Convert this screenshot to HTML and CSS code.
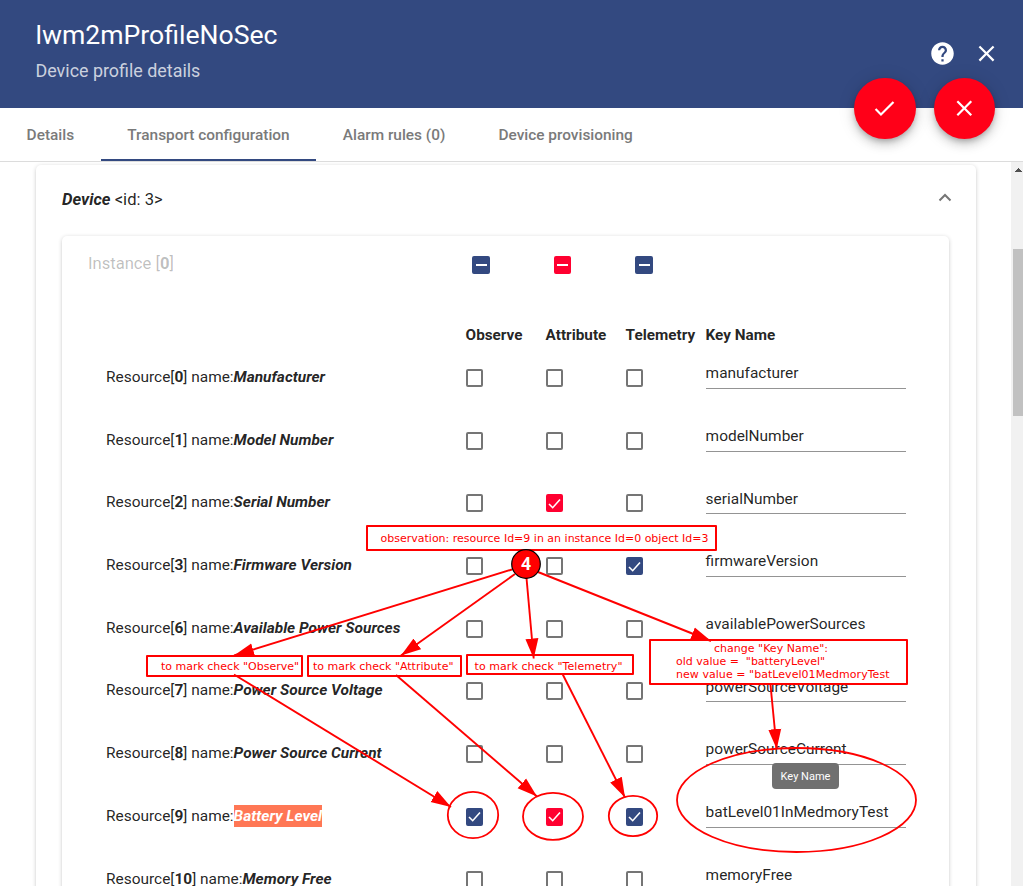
FILE: index.html
```html
<!DOCTYPE html>
<html lang="en">
<head>
<meta charset="utf-8">
<title>Device profile details</title>
<link rel="stylesheet" href="styles.css">
</head>
<body>
<div class="page">
  <header class="header">
    <div class="titles">
      <h1 class="title">lwm2mProfileNoSec</h1>
      <p class="subtitle">Device profile details</p>
    </div>
    <div class="header-actions">
      <svg class="icon" viewBox="0 0 24 24"><path d="M12 2C6.48 2 2 6.48 2 12s4.48 10 10 10 10-4.480 10-10S17.520 2 12 2zm1 17h-2v-2h2v2zm2.070-7.750l-.9.920C13.450 12.900 13 13.500 13 15h-2v-.5c0-1.100.45-2.100 1.170-2.830l1.240-1.260c.37-.36.59-.86.59-1.410 0-1.100-.9-2-2-2s-2 .9-2 2H8c0-2.210 1.790-4 4-4s4 1.790 4 4c0 .88-.36 1.680-.93 2.250z"/></svg>
      <svg class="icon" viewBox="0 0 24 24"><path d="M19 6.410L17.590 5 12 10.590 6.410 5 5 6.410 10.590 12 5 17.590 6.410 19 12 13.410 17.590 19 19 17.590 13.410 12z"/></svg>
    </div>
    <div class="fabs">
      <button class="fab"><svg class="icon" viewBox="0 0 24 24"><path d="M9 16.170L4.830 12l-1.420 1.410L9 19 21 7l-1.410-1.410z"/></svg></button>
      <button class="fab"><svg class="icon" viewBox="0 0 24 24"><path d="M19 6.410L17.590 5 12 10.590 6.410 5 5 6.410 10.590 12 5 17.590 6.410 19 12 13.410 17.590 19 19 17.590 13.410 12z"/></svg></button>
    </div>
  </header>
  <nav class="tabs">
    <span class="tab">Details</span>
    <span class="tab active">Transport configuration</span>
    <span class="tab">Alarm rules (0)</span>
    <span class="tab">Device provisioning</span>
  </nav>
  <main class="body">
    <div class="scroll-area">
      <section class="card">
        <div class="card-head">
          <span class="card-title"><b><i>Device</i></b> &lt;id: 3&gt;</span>
          <svg class="chevron" viewBox="0 0 14 9"><path d="M1.500 7.500L7 2l5.500 5.500"/></svg>
        </div>
        <section class="instance">
          <div class="instance-head">
            <span class="instance-title">Instance [<b>0</b>]</span>
            <span class="box blue dash"></span>
            <span class="box red dash"></span>
            <span class="box blue dash"></span>
          </div>
          <div class="row column-names">
            <span></span><span>Observe</span><span>Attribute</span><span>Telemetry</span><span>Key Name</span>
          </div>
          <div class="rows" id="rows"></div>
        </section>
      </section>
    </div>
    <div class="scrollbar">
      <svg class="scroll-arrow" viewBox="0 0 7 4"><path d="M3 0h1v1h1v1h1v1h1v1H0V3h1V2h1V1h1z"/></svg>
      <div class="thumb"></div>
    </div>
  </main>

  <div class="tooltip">Key Name</div>

  <svg class="annotations" viewBox="0 0 1023 886">
    <defs>
      <marker id="head" markerUnits="userSpaceOnUse" markerWidth="20" markerHeight="14" refX="20" refY="7" orient="auto"><path d="M0 0.500L20 7L0 13.500z"/></marker>
    </defs>
    <g class="note-box">
      <rect x="367" y="526" width="349" height="24"/>
      <rect x="147" y="656" width="155" height="20"/>
      <rect x="308" y="656" width="153" height="20"/>
      <rect x="467" y="655" width="166" height="19"/>
      <rect x="650" y="640" width="257" height="44"/>
    </g>
    <g class="ring">
      <ellipse cx="473" cy="815" rx="25.200" ry="23.200"/>
      <ellipse cx="553" cy="816.400" rx="30" ry="23.500"/>
      <ellipse cx="633" cy="816" rx="24.200" ry="20.200"/>
      <ellipse cx="796.500" cy="800" rx="119.500" ry="52"/>
    </g>
    <g class="arrow">
      <path d="M512 569.500L234 655.500"/>
      <path d="M515 574L401 655.500"/>
      <path d="M526.500 578L533.700 658.500"/>
      <path d="M538 572L711 641"/>
      <path d="M234 674.500L451 807"/>
      <path d="M396 675L537 796.500"/>
      <path d="M562.500 674L625 797.500"/>
      <path d="M770.500 685L776.700 749"/>
    </g>
    <g class="note-text">
      <text x="380.500" y="542" textLength="328">observation: resource Id=9 in an instance Id=0 object Id=3</text>
      <text x="161" y="670" textLength="138">to mark check "Observe"</text>
      <text x="313" y="670" textLength="140.500">to mark check "Attribute"</text>
      <text x="474.500" y="670" textLength="148">to mark check "Telemetry"</text>
      <text x="714" y="652" textLength="114">change "Key Name":</text>
      <text x="676" y="665" textLength="149">old value = &#160;"batteryLevel"</text>
      <text x="676" y="678" textLength="213.500">new value = "batLevel01MedmoryTest</text>
    </g>
    <circle class="badge" cx="526" cy="564" r="14.300"/>
    <text class="badge-text" x="526" y="570">4</text>
  </svg>
</div>
<script src="rows.js"></script>
</body>
</html>
```
FILE: styles.css
```css
* { box-sizing: border-box; }
body { margin: 0; font-family: Roboto, sans-serif; color: rgba(0, 0, 0, .87); background: #fff; }
.page { position: relative; width: 1023px; height: 886px; overflow: hidden; display: flex; flex-direction: column; }

.header { position: relative; flex: none; height: 108px; padding: 18px 23px 0 35.500px; background: #334980; color: #fff; display: flex; justify-content: space-between; }
.title { margin: 0; font-size: 26.600px; font-weight: 400; line-height: 34px; }
.subtitle { margin: 8px 0 0; font-size: 17.900px; line-height: 22px; color: rgba(255, 255, 255, .75); }
.header-actions { display: flex; gap: 17px; padding-top: 22px; }
.icon { width: 27px; height: 27px; display: block; fill: #fff; }
.fabs { position: absolute; z-index: 2; right: 28px; top: 77.600px; display: flex; gap: 18px; }
.fab { width: 61.500px; height: 61.500px; padding: 0; border: 0; border-radius: 50%; background: #ff0018; display: flex; align-items: center; justify-content: center; box-shadow: 0 3px 5px -1px rgba(0, 0, 0, .2), 0 6px 10px rgba(0, 0, 0, .14), 0 1px 18px rgba(0, 0, 0, .12); }
.fab .icon { width: 26.600px; height: 26.600px; }

.tabs { flex: none; height: 54px; border-bottom: 1px solid #dcdcdc; display: flex; }
.tab { padding: 1px 26.600px 0; line-height: 53px; font-size: 15.400px; font-weight: 500; color: #7a7a7a; white-space: nowrap; }
.tab.active { height: 53px; border-bottom: 2px solid #334980; }

.body { flex: 1; min-height: 0; display: flex; }
.scroll-area { flex: 1; overflow: hidden; padding: 3px 35px 0 36px; }
.card { height: 800px; padding: 0 27px 0 26px; border-radius: 5px; box-shadow: 0 2px 2px -1px rgba(0, 0, 0, .15), 0 1px 4px rgba(0, 0, 0, .2); }
.card-head { height: 71px; display: flex; align-items: center; justify-content: space-between; font-size: 16.600px; }
.card-title { padding-bottom: 3px; }
.chevron { width: 14px; height: 9px; margin: 0 -3px 7px 0; fill: none; stroke: #757575; stroke-width: 2; }
.instance { height: 760px; padding-left: 26px; border-radius: 5px; box-shadow: 0 2px 2px -1px rgba(0, 0, 0, .15), 0 1px 4px rgba(0, 0, 0, .2); }
.instance-head { height: 83px; padding-top: 20px; display: grid; grid-template-columns: 384px 82px 81px 82px; align-items: start; font-size: 16.600px; color: rgba(0, 0, 0, .26); }
.instance-title { line-height: 16px; }

.row { display: grid; grid-template-columns: 359.600px 80px 80px 80px 200px; padding-left: 18px; font-size: 15.440px; }
.column-names { height: 28px; line-height: 32px; font-size: 15.300px; font-weight: 700; }
.resource { height: 62.700px; }
.label { padding-top: 20px; line-height: 21px; white-space: nowrap; }
.highlight { color: #fff; background: #ff7755; display: inline-block; height: 22px; margin-top: -1px; line-height: 23px; vertical-align: top; }
.key { height: 42px; padding-top: 16.300px; line-height: 21px; border-bottom: 1px solid #949494; }
.box { width: 17px; height: 18px; border-radius: 2px; border: 2px solid #757575; display: flex; align-items: center; justify-content: center; }
.resource .box { margin-top: 22px; }
.box.blue { background: #334980; border-color: #334980; }
.box.red { background: #ff0030; border-color: #ff0030; }
.box.dash { width: 18px; }
.box.red.dash { width: 17px; }
.dash::after { content: ""; flex: none; width: 11px; height: 2px; background: #fff; }
.tick { flex: none; width: 15px; height: 15px; fill: none; stroke: #fff; stroke-width: 1.600; }

.scrollbar { width: 12px; padding: 6px 0 0 2px; background: #f1f1f1; }
.scroll-arrow { display: block; width: 7px; height: 4px; margin-left: 2px; fill: #505050; }
.thumb { width: 10px; height: 167px; margin-top: 77px; background: #c1c1c1; }

.tooltip { position: absolute; left: 772px; top: 763px; width: 67px; height: 26px; line-height: 27px; text-align: center; font-size: 11px; color: #fff; background: #707070; border-radius: 4px; }
.annotations { position: absolute; left: 0; top: 0; width: 1023px; height: 886px; }
.annotations marker path { fill: #f00; }
.note-box rect { fill: #fff; stroke: #f00; stroke-width: 2; stroke-linejoin: round; }
.ring ellipse { fill: none; stroke: #f00; stroke-width: 1.800; }
.arrow path { fill: none; stroke: #f00; stroke-width: 1.900; marker-end: url(#head); }
.note-text { font-family: "DejaVu Sans", sans-serif; font-size: 11px; fill: #f00; }
.badge { fill: #f00; stroke: #000; stroke-width: 1.200; }
.badge-text { font-family: "Noto Sans", sans-serif; font-size: 17px; font-weight: 700; fill: #fff; text-anchor: middle; }
```
FILE: rows.js
```js
const resources = [
  [0, 'Manufacturer', 'manufacturer', '000'],
  [1, 'Model Number', 'modelNumber', '000'],
  [2, 'Serial Number', 'serialNumber', '010'],
  [3, 'Firmware Version', 'firmwareVersion', '001'],
  [6, 'Available Power Sources', 'availablePowerSources', '000'],
  [7, 'Power Source Voltage', 'powerSourceVoltage', '000'],
  [8, 'Power Source Current', 'powerSourceCurrent', '000'],
  [9, 'Battery Level', 'batLevel01InMedmoryTest', '111'],
  [10, 'Memory Free', 'memoryFree', '000'],
];
const tick = '<svg class="tick" viewBox="0 0 15 15"><path d="M2 8l3.700 3.700L13 3.500"/></svg>';
const colors = ['blue', 'red', 'blue'];
document.getElementById('rows').innerHTML = resources.map(([id, name, key, checks]) => `
  <div class="row resource">
    <span class="label">Resource[<b>${id}</b>] name:<b><i${id === 9 ? ' class="highlight"' : ''}>${name}</i></b></span>
    ${[...checks].map((c, i) => c === '1' ? `<span class="box ${colors[i]}">${tick}</span>` : '<span class="box"></span>').join('')}
    <span class="key">${key}</span>
  </div>`).join('');
```
